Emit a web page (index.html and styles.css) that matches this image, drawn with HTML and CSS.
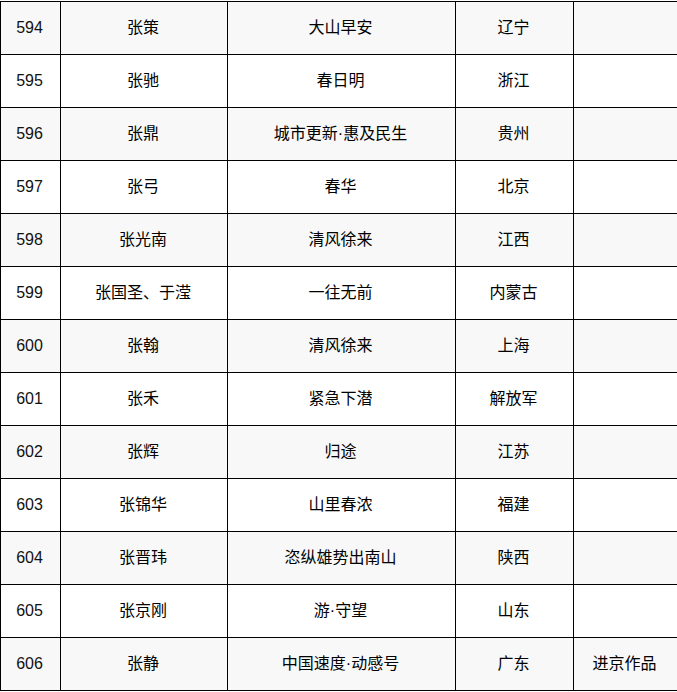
FILE: index.html
```html
<!DOCTYPE html>
<html lang="zh-CN">
<head>
<meta charset="utf-8">
<title>名单</title>
<link rel="stylesheet" href="styles.css">
</head>
<body>
<table class="list">
  <colgroup>
    <col class="c1"><col class="c2"><col class="c3"><col class="c4"><col class="c5">
  </colgroup>
  <tbody>
    <tr class="alt"><td class="num">594</td><td>张策</td><td>大山早安</td><td>辽宁</td><td></td></tr>
    <tr><td class="num">595</td><td>张驰</td><td>春日明</td><td>浙江</td><td></td></tr>
    <tr class="alt"><td class="num">596</td><td>张鼎</td><td>城市更新·惠及民生</td><td>贵州</td><td></td></tr>
    <tr><td class="num">597</td><td>张弓</td><td>春华</td><td>北京</td><td></td></tr>
    <tr class="alt"><td class="num">598</td><td>张光南</td><td>清风徐来</td><td>江西</td><td></td></tr>
    <tr><td class="num">599</td><td>张国圣、于滢</td><td>一往无前</td><td>内蒙古</td><td></td></tr>
    <tr class="alt"><td class="num">600</td><td>张翰</td><td>清风徐来</td><td>上海</td><td></td></tr>
    <tr><td class="num">601</td><td>张禾</td><td>紧急下潜</td><td>解放军</td><td></td></tr>
    <tr class="alt"><td class="num">602</td><td>张辉</td><td>归途</td><td>江苏</td><td></td></tr>
    <tr><td class="num">603</td><td>张锦华</td><td>山里春浓</td><td>福建</td><td></td></tr>
    <tr class="alt"><td class="num">604</td><td>张晋玮</td><td>恣纵雄势出南山</td><td>陕西</td><td></td></tr>
    <tr><td class="num">605</td><td>张京刚</td><td>游·守望</td><td>山东</td><td></td></tr>
    <tr class="alt"><td class="num">606</td><td>张静</td><td>中国速度·动感号</td><td>广东</td><td>进京作品</td></tr>
  </tbody>
</table>
</body>
</html>
```

FILE: styles.css
```css
html, body {
  margin: 0;
  padding: 0;
  background: #ffffff;
}
body {
  padding-top: 1px;
}
.list {
  border-collapse: collapse;
  table-layout: fixed;
  width: 677px;
  font-family: "Liberation Sans", "Noto Sans CJK SC", sans-serif;
  font-size: 16px;
  color: #000;
}
.c1 { width: 60px; }
.c2 { width: 167px; }
.c3 { width: 228px; }
.c4 { width: 118px; }
.c5 { width: 104px; }
.list td {
  border: 1px solid #000;
  height: 52px;
  padding: 0 2px 0 0;
  text-align: center;
  vertical-align: middle;
  line-height: 20px;
  white-space: nowrap;
}
.list tr.alt td {
  background: #f8f8f8;
}
.list td.num {
  font-family: "Liberation Sans", Arial, sans-serif;
  font-size: 16px;
  color: #111;
  padding-right: 2px;
}
```
